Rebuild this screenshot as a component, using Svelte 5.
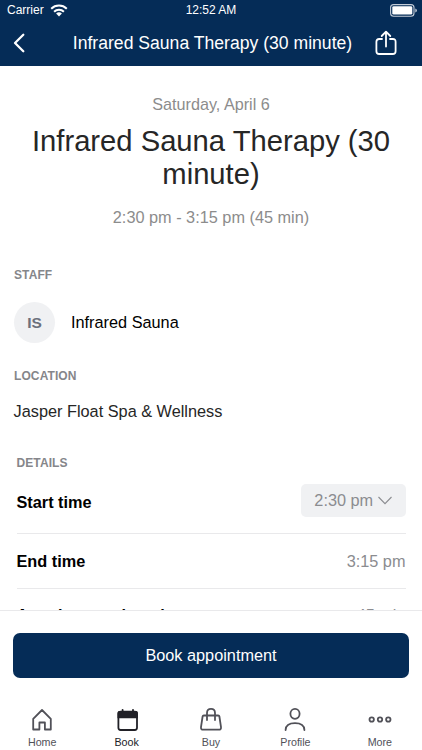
<script>
  const title = 'Infrared Sauna Therapy (30 minute)';
  const rows = [
    { label: 'Start time', value: '2:30 pm', picker: true },
    { label: 'End time', value: '3:15 pm' },
    { label: 'Appointment length', value: '45 min' }
  ];
</script>

<div class="screen">
  <header>
    <div class="status">
      <div class="carrier">
        <span>Carrier</span>
        <svg width="18" height="13" viewBox="0 0 18 13" fill="none" stroke="#fff" stroke-width="2">
          <path d="M1.2 4.7a11.2 11.2 0 0 1 15.6 0M4.1 7.7a7 7 0 0 1 9.8 0" />
          <path d="M6.1 9.6a4.2 4.2 0 0 1 5.8 0L9 12.4z" fill="#fff" stroke="none" />
        </svg>
      </div>
      <span class="clock">12:52 AM</span>
      <div class="battery">
        <svg width="28" height="13" viewBox="0 0 28 13">
          <rect x=".6" y=".6" width="23.4" height="11.6" rx="3" fill="none" stroke="#c3ccd8" stroke-width="1.1" />
          <rect x="2.3" y="2.2" width="20" height="8.4" rx="1.4" fill="#fff" />
          <path d="M25.3 4.4q1.6.6 1.6 2t-1.6 2z" fill="#c3ccd8" />
        </svg>
      </div>
    </div>
    <div class="nav">
      <svg width="12" height="20" viewBox="0 0 12 20" fill="none" stroke="#fff" stroke-width="2.3" stroke-linecap="round" stroke-linejoin="round">
        <path d="M10.3 1.8 2 10l8.3 8.2" />
      </svg>
      <span>{title}</span>
      <svg width="22" height="26" viewBox="0 0 22 26" fill="none" stroke="#fff" stroke-width="1.8" stroke-linecap="round" stroke-linejoin="round">
        <path d="M7 9H4.2Q1.4 9 1.4 11.8v9.4Q1.4 24 4.2 24h13.6q2.8 0 2.8-2.8v-9.4Q20.6 9 17.8 9H15M11 16.5V2M6.7 6 11 1.6 15.3 6" />
      </svg>
    </div>
  </header>

  <main>
    <section class="summary">
      <p class="date">Saturday, April 6</p>
      <h1>{title}</h1>
      <p class="time">2:30 pm - 3:15 pm (45 min)</p>
    </section>
    <section>
      <h2>STAFF</h2>
      <div class="staff">
        <span class="avatar">IS</span>
        <span class="name">Infrared Sauna</span>
      </div>
    </section>
    <section class="location">
      <h2>LOCATION</h2>
      <p>Jasper Float Spa &amp; Wellness</p>
    </section>
    <section class="details">
      <h2>DETAILS</h2>
      {#each rows as row}
        <div class="row" class:first={row.picker}>
          <strong>{row.label}</strong>
          {#if row.picker}
            <button class="picker">
              {row.value}
              <svg width="14" height="9" viewBox="0 0 14 9" fill="none" stroke="#8b8c90" stroke-width="1.1">
                <path d="M.5 1 7 7.6 13.5 1" />
              </svg>
            </button>
          {:else}
            <span>{row.value}</span>
          {/if}
        </div>
      {/each}
    </section>
  </main>

  <footer>
    <button class="cta">Book appointment</button>
    <nav>
      <div class="tab">
        <svg width="24" height="26" viewBox="0 0 24 26" fill="none" stroke="#515158" stroke-width="1.8" stroke-linejoin="round">
          <path d="M3.2 11.8 12 3l8.8 8.8V22.5h-5.9v-7H9.4v7H3.2z" />
        </svg>
        <span>Home</span>
      </div>
      <div class="tab active">
        <svg width="24" height="26" viewBox="0 0 24 26">
          <rect x="3.4" y="4.7" width="18.6" height="18.3" rx="2.2" fill="#fff" stroke="#212127" stroke-width="1.8" />
          <path d="M2.5 11.2V6q0-2 2-2h16.4q2 0 2 2v5.2z" fill="#212127" />
          <path d="M7.6 5V2.8M18 5V2.8" stroke="#212127" stroke-width="1.8" stroke-linecap="round" />
        </svg>
        <span>Book</span>
      </div>
      <div class="tab">
        <svg width="24" height="26" viewBox="0 0 24 26" fill="none" stroke="#515158" stroke-width="1.8" stroke-linecap="round" stroke-linejoin="round">
          <path d="M4.8 8.5h14.4q1 0 1.2 1l1.6 10.7q.3 2.5-2.2 2.5H4.2q-2.5 0-2.2-2.5L3.6 9.5q.2-1 1.2-1zM8 13V6q0-4.2 4-4.2T16 6v7" />
        </svg>
        <span>Buy</span>
      </div>
      <div class="tab">
        <svg width="24" height="26" viewBox="0 0 24 26" fill="none" stroke="#515158" stroke-width="1.8" stroke-linecap="round">
          <ellipse cx="12" cy="6.8" rx="4.6" ry="5" />
          <path d="M2.6 23q.3-6.8 9.4-6.8T21.4 23" />
        </svg>
        <span>Profile</span>
      </div>
      <div class="tab">
        <svg width="24" height="26" viewBox="0 0 24 26" fill="none" stroke="#515158" stroke-width="1.8">
          <circle cx="3.7" cy="12.5" r="2.2" /><circle cx="12" cy="12.5" r="2.2" /><circle cx="20.3" cy="12.5" r="2.2" />
        </svg>
        <span>More</span>
      </div>
    </nav>
  </footer>
</div>

<style>
  .screen {
    width: 422px;
    height: 750px;
    display: flex;
    flex-direction: column;
    overflow: hidden;
    background: #fff;
    color: #111;
    font: 16.3px 'Liberation Sans', Arial, sans-serif;
  }
  p, h1, h2 { margin: 0; font-weight: 400; }
  svg { display: block; flex: none; }
  button { border: 0; padding: 0; font: inherit; }
  header { flex: none; height: 66px; background: #052c57; color: #fff; }
  .status {
    height: 20px;
    display: grid;
    grid-template-columns: 1fr auto 1fr;
    align-items: center;
    padding: 0 4px 0 7px;
    font-size: 12px;
  }
  .carrier { display: flex; align-items: center; gap: 6px; }
  .clock { font-size: 12px; padding-right: 3px; }
  .battery { display: flex; justify-content: flex-end; }
  .nav {
    height: 46px;
    display: flex;
    align-items: center;
    justify-content: space-between;
    padding: 0 25px 0 13px;
    box-sizing: border-box;
    font-size: 17.6px;
  }
  .nav span { margin-left: 25px; white-space: nowrap; }
  .nav svg { margin-bottom: 1px; }
  main { flex: 1; min-height: 0; overflow: hidden; padding: 0 14px; }
  .summary { text-align: center; padding-top: 28px; }
  .date { font-size: 16.2px; line-height: 20px; color: #8c8c8c; }
  h1 { font-size: 29.2px; line-height: 33px; padding: 11px 0 16px; color: #262626; margin: 0 -4px; }
  .time { line-height: 20px; color: #8c8c8c; }
  h2 { font-size: 12px; line-height: 16px; font-weight: 700; color: #85868a; letter-spacing: .1px; }
  .summary + section { padding-top: 40px; }
  .staff { display: flex; align-items: center; gap: 16px; padding-top: 19px; }
  .avatar {
    width: 41px;
    height: 41px;
    border-radius: 50%;
    background: #f0f1f3;
    color: #6c707c;
    display: grid;
    place-items: center;
    font-weight: 700;
    font-size: 15.5px;
  }
  .name { color: #000; }
  .location { padding-top: 25px; }
  .location p { line-height: 20px; padding-top: 17px; color: #262626; margin-left: -.4px; }
  .details { padding: 34px 2.5px 0; }
  .row {
    display: flex;
    align-items: center;
    justify-content: space-between;
    height: 54px;
    border-bottom: 1px solid #e9e9eb;
    color: #8b8c90;
  }
  .row.first { height: 62px; }
  .row:last-child { height: 53px; }
  .row strong { color: #000; }
  .picker {
    width: 104.5px;
    height: 33px;
    margin-bottom: 3px;
    border-radius: 5px;
    background: #f0f1f3;
    color: #8b8c90;
    display: flex;
    align-items: center;
    justify-content: center;
    gap: 5px;
  }
  footer { flex: none; height: 140px; box-sizing: border-box; border-top: 1px solid #e9e9eb; padding: 22px 13px 0; background: #fff; }
  .cta { display: block; width: 396px; height: 45px; border-radius: 7px; background: #052c57; color: #fff; font-size: 16.3px; }
  nav { display: flex; margin: 29px -13px 0; }
  .tab { flex: 1; display: flex; flex-direction: column; align-items: center; color: #515158; font-size: 10.7px; line-height: 14px; gap: 2px; }
  .active { color: #212127; }
</style>
